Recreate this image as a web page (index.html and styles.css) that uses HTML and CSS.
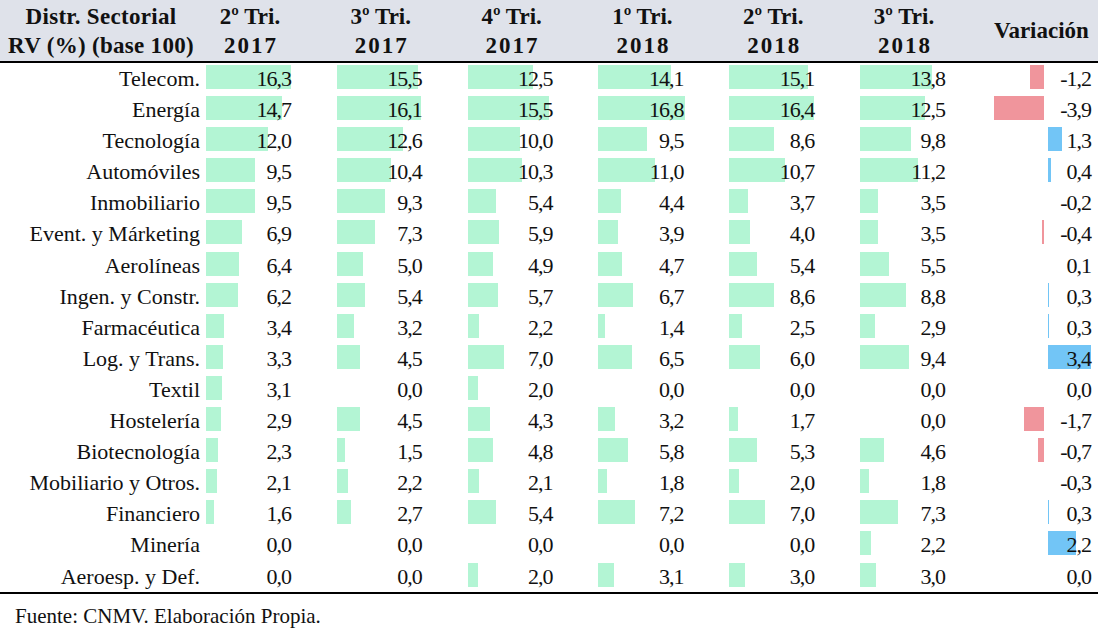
FILE: index.html
```html
<!DOCTYPE html>
<html lang="es">
<head>
<meta charset="utf-8">
<title>Distr. Sectorial RV</title>
<link rel="stylesheet" href="styles.css">
</head>
<body>
<div class="table">
  <div class="head">
    <div class="hcell label-h">Distr. Sectorial<br>RV (%) (base 100)</div>
    <div class="hcol"><div class="hcell">2º Tri.<br><span class="yr">2017</span></div></div>
    <div class="hcol"><div class="hcell">3º Tri.<br><span class="yr">2017</span></div></div>
    <div class="hcol"><div class="hcell">4º Tri.<br><span class="yr">2017</span></div></div>
    <div class="hcol"><div class="hcell">1º Tri.<br><span class="yr">2018</span></div></div>
    <div class="hcol"><div class="hcell">2º Tri.<br><span class="yr">2018</span></div></div>
    <div class="hcol"><div class="hcell">3º Tri.<br><span class="yr">2018</span></div></div>
    <div class="hcell var-h">Variación</div>
  </div>
  <div class="body" id="body"></div>
</div>
<p class="source">Fuente: CNMV. Elaboración Propia.</p>
<script src="script.js"></script>
</body>
</html>
```

FILE: styles.css
```css
* { box-sizing: border-box; }
html, body { margin: 0; padding: 0; background: #ffffff; }
body {
  font-family: "Liberation Serif", "Times New Roman", serif;
  color: #111111;
  width: 1098px;
}
.table { width: 1098px; }
.head {
  display: grid;
  grid-template-columns: 206px repeat(6, 130.8px) 1fr;
  background: #dfe2ea;
  height: 63px;
  border-bottom: 2px solid #000000;
  font-weight: bold;
  font-size: 23px;
  line-height: 29px;
  padding-top: 2px;
}
.hcell { text-align: center; white-space: nowrap; }
.hcol .hcell { width: 88px; }
.yr { letter-spacing: 2px; padding-left: 2px; }
.label-h { padding-right: 4px; letter-spacing: 0.3px; }
.var-h { line-height: 58px; padding-right: 6px; }
.body { border-bottom: 2px solid #000000; }
.row {
  display: grid;
  grid-template-columns: 206px repeat(6, 130.8px) 1fr;
  height: 31.1px;
  font-size: 22px;
  line-height: 31px;
}
.lbl { text-align: right; padding-right: 6px; white-space: nowrap; }
.cell {
  position: relative;
  width: 88px;
  height: 100%;
  text-align: right;
  padding-right: 3px;
  letter-spacing: -1px;
}
.bar {
  position: absolute;
  left: 0;
  top: 2px;
  height: 24px;
  background: #b3f5d4;
}
.num { position: relative; }
.vcell {
  position: relative;
  height: 100%;
  text-align: right;
  padding-right: 7px;
  letter-spacing: -1px;
}
.vbar {
  position: absolute;
  top: 2px;
  height: 24px;
}
.vbar.neg { right: 54px; background: #f0959c; }
.vbar.pos { left: 57px; background: #72c5f6; }
.source {
  margin: 0;
  padding-left: 15px;
  font-size: 21px;
  line-height: 44px;
}
```

FILE: script.js
```js
var rows = [
  ["Telecom.", [16.3, 15.5, 12.5, 14.1, 15.1, 13.8], -1.2, -14],
  ["Energía", [14.7, 16.1, 15.5, 16.8, 16.4, 12.5], -3.9, -50],
  ["Tecnología", [12.0, 12.6, 10.0, 9.5, 8.6, 9.8], 1.3, 14],
  ["Automóviles", [9.5, 10.4, 10.3, 11.0, 10.7, 11.2], 0.4, 3],
  ["Inmobiliario", [9.5, 9.3, 5.4, 4.4, 3.7, 3.5], -0.2, 0],
  ["Event. y Márketing", [6.9, 7.3, 5.9, 3.9, 4.0, 3.5], -0.4, -2],
  ["Aerolíneas", [6.4, 5.0, 4.9, 4.7, 5.4, 5.5], 0.1, 0],
  ["Ingen. y Constr.", [6.2, 5.4, 5.7, 6.7, 8.6, 8.8], 0.3, 1],
  ["Farmacéutica", [3.4, 3.2, 2.2, 1.4, 2.5, 2.9], 0.3, 1],
  ["Log. y Trans.", [3.3, 4.5, 7.0, 6.5, 6.0, 9.4], 3.4, 43],
  ["Textil", [3.1, 0.0, 2.0, 0.0, 0.0, 0.0], 0.0, 0],
  ["Hostelería", [2.9, 4.5, 4.3, 3.2, 1.7, 0.0], -1.7, -20],
  ["Biotecnología", [2.3, 1.5, 4.8, 5.8, 5.3, 4.6], -0.7, -6],
  ["Mobiliario y Otros.", [2.1, 2.2, 2.1, 1.8, 2.0, 1.8], -0.3, 0],
  ["Financiero", [1.6, 2.7, 5.4, 7.2, 7.0, 7.3], 0.3, 1],
  ["Minería", [0.0, 0.0, 0.0, 0.0, 0.0, 2.2], 2.2, 28],
  ["Aeroesp. y Def.", [0.0, 0.0, 2.0, 3.1, 3.0, 3.0], 0.0, 0]
];
function fmt(v) { return v.toFixed(1).replace(".", ","); }
var body = document.getElementById("body");
rows.forEach(function (r) {
  var row = document.createElement("div");
  row.className = "row";
  var lbl = document.createElement("div");
  lbl.className = "lbl";
  lbl.textContent = r[0];
  row.appendChild(lbl);
  r[1].forEach(function (v) {
    var col = document.createElement("div");
    var cell = document.createElement("div");
    cell.className = "cell";
    if (v > 0) {
      var bar = document.createElement("div");
      bar.className = "bar";
      bar.style.width = Math.round(v * 5.2) + "px";
      cell.appendChild(bar);
    }
    var n = document.createElement("span");
    n.className = "num";
    n.textContent = fmt(v);
    cell.appendChild(n);
    col.appendChild(cell);
    row.appendChild(col);
  });
  var vc = document.createElement("div");
  vc.className = "vcell";
  if (r[3] !== 0) {
    var vb = document.createElement("div");
    vb.className = "vbar " + (r[3] < 0 ? "neg" : "pos");
    vb.style.width = Math.abs(r[3]) + "px";
    vc.appendChild(vb);
  }
  var vn = document.createElement("span");
  vn.className = "num";
  vn.textContent = fmt(r[2]);
  vc.appendChild(vn);
  row.appendChild(vc);
  body.appendChild(row);
});
```
